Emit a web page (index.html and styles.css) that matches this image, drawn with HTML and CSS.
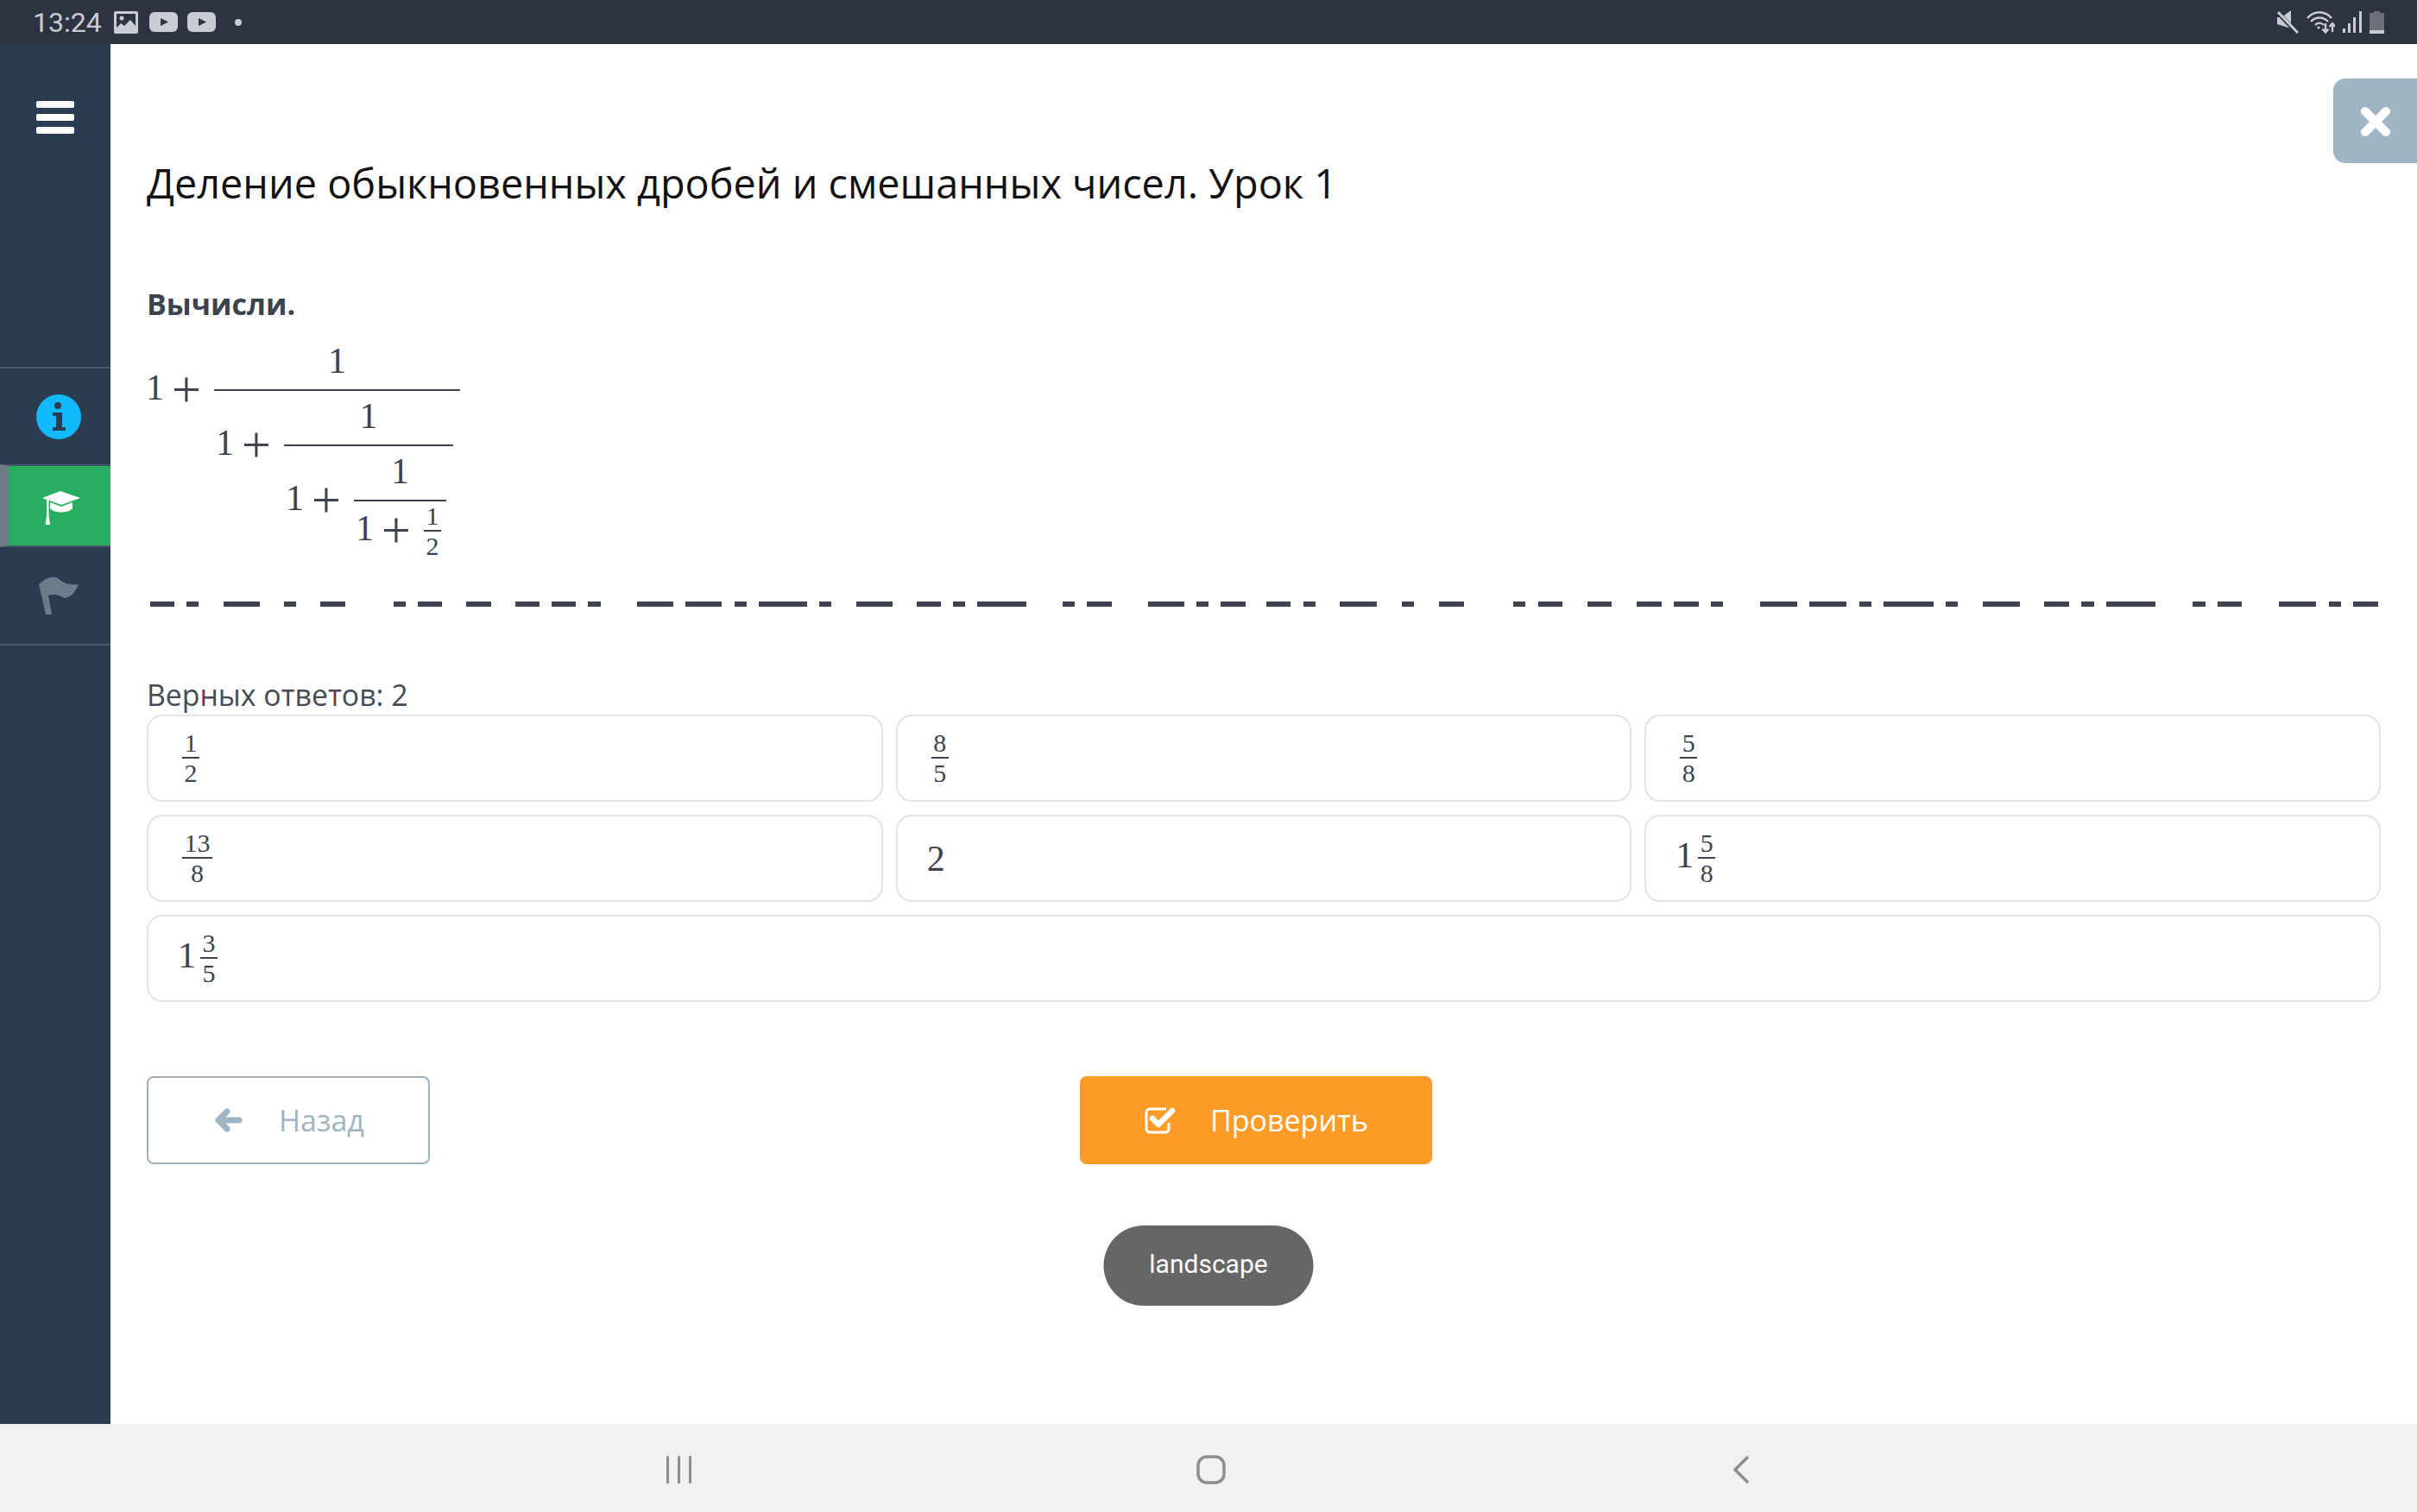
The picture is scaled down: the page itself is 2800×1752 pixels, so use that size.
FILE: index.html
```html
<!DOCTYPE html>
<html lang="ru">
<head>
    <meta charset="UTF-8">
    <title>Деление обыкновенных дробей и смешанных чисел. Урок 1</title>
    <link rel="stylesheet" href="styles.css">
</head>
<body>
    <div id="app">
        <!-- Android status bar -->
        <div class="status-bar">
            <div class="status-left">
                <span class="time">13:24</span>
                <svg class="st-image" width="28" height="26" viewBox="0 0 28 26"><path fill="#c9ccd2" d="M2 0h24a2 2 0 0 1 2 2v22a2 2 0 0 1-2 2H2a2 2 0 0 1-2-2V2a2 2 0 0 1 2-2z"/><path fill="#2d3340" d="M3 3h22v14l-6-7-7 7-4-3-5 5z"/><circle cx="9" cy="8" r="2.5" fill="#c9ccd2"/></svg>
                <svg class="st-yt" width="33" height="23" viewBox="0 0 33 23"><rect width="33" height="23" rx="6" fill="#c9ccd2"/><path fill="#2d3340" d="M13 7l9 4.5-9 4.5z"/></svg>
                <svg class="st-yt" width="33" height="23" viewBox="0 0 33 23"><rect width="33" height="23" rx="6" fill="#c9ccd2"/><path fill="#2d3340" d="M13 7l9 4.5-9 4.5z"/></svg>
                <span class="st-dot"></span>
            </div>
            <div class="status-right">
                <svg width="25" height="27" viewBox="0 0 25 27"><path fill="#c9ccd2" d="M0 8h5l11-8v21L0 16z"/><path stroke="#2d3340" stroke-width="5" d="M0 2l23 24"/><path stroke="#c9ccd2" stroke-width="3" d="M1 2l23 24"/></svg>
                <svg width="33" height="27" viewBox="0 0 33 27" fill="none" stroke="#c9ccd2" stroke-width="2.4"><path d="M1 9c8-9 20-9 28 0"/><path d="M5 13c6-6 14-6 20 0"/><path d="M10 17c3-3 7-3 10 0"/><circle cx="14" cy="20" r="1.6" fill="#c9ccd2" stroke="none"/><path d="M22 15v10M18.500 21.500l3.500 4 3.500-4M30 25v-10M26.500 19l3.500-4 3.500 4"/></svg>
                <svg width="22" height="25" viewBox="0 0 22 25" fill="#c9ccd2"><rect x="0" y="20" width="3" height="5"/><rect x="6" y="14" width="3" height="11"/><rect x="12" y="7" width="3" height="18"/><rect x="19" y="0" width="3" height="25"/></svg>
                <svg width="17" height="26" viewBox="0 0 17 26"><path fill="#6c707a" d="M5 0h7v2h5v20H0V2h5z"/><rect y="22" width="17" height="4" fill="#c9ccd2"/></svg>
            </div>
        </div>

        <div class="screen">
            <aside class="sidebar">
                <div class="burger"><span></span><span></span><span></span></div>
                <div class="side-item side-info">
                    <svg width="52" height="52" viewBox="0 0 52 52"><circle cx="26" cy="26" r="26" fill="#12b9ff"/><circle cx="25" cy="13" r="4" fill="#2c3c50"/><path fill="#2c3c50" d="M19 21h11v17h4v4H19v-4h4V25h-4z"/></svg>
                </div>
                <div class="side-item side-lesson">
                    <svg width="44" height="39" viewBox="0 0 44 39" fill="#fff"><path d="M21 0l23 8-22 8L0 8z"/><path d="M9 13l13 5 13-5v7c-4 6-22 6-26 0z"/><path d="M5 10l2.500 1v17L9 39H3.500L5 28z"/></svg>
                </div>
                <div class="side-item side-flag">
                    <svg width="46" height="44" viewBox="0 0 46 44"><path fill="#6c7c8d" d="M0 9C8 1 16-1 22 2c6 6 14 8 24 7-4 10-9 15-17 16-5-4-11-5-18-3l4 22H8z"/></svg>
                </div>
            </aside>

            <main class="content">
                <button class="close-btn"><svg width="36" height="36" viewBox="0 0 36 36"><path d="M6 6l24 24M30 6L6 30" stroke="#fff" stroke-width="10" stroke-linecap="round"/></svg></button>
                <h1 class="lesson-title">Деление обыкновенных дробей и смешанных чисел. Урок 1</h1>
                <p class="task-title">Вычисли.</p>

                <div class="math task-formula">
                    <div class="frac">
                        <div class="lead"><span class="lead-in"><span>1</span><span class="plus">+</span></span></div>
                        <div class="num">1</div>
                        <div class="bar"></div>
                        <div class="den">
                            <div class="frac">
                                <div class="lead"><span class="lead-in"><span>1</span><span class="plus">+</span></span></div>
                                <div class="num">1</div>
                                <div class="bar"></div>
                                <div class="den">
                                    <div class="frac">
                                        <div class="lead"><span class="lead-in"><span>1</span><span class="plus">+</span></span></div>
                                        <div class="num">1</div>
                                        <div class="bar"></div>
                                        <div class="den den-last">
                                            <div class="frac">
                                                <div class="lead"><span class="lead-in"><span>1</span><span class="plus">+</span></span></div>
                                                <div class="num small">1</div>
                                                <div class="bar"></div>
                                                <div class="den small">2</div>
                                            </div>
                                        </div>
                                    </div>
                                </div>
                            </div>
                        </div>
                    </div>
                </div>

                <!-- broken answer field line -->
                <div class="dashes">
                    <div class="dash-set set-a">
                        <i class="d2"></i><i class="g1 d1"></i><i class="g2 d3"></i><i class="g2 d1"></i><i class="g2 d2"></i><i class="g4 d1"></i><i class="g1 d2"></i><i class="g2 d2"></i><i class="g2 d2"></i><i class="g1 d2"></i><i class="g1 d1"></i><i class="g3 d3"></i><i class="g1 d3"></i><i class="g1 d1"></i><i class="g1 d4"></i><i class="g1 d1"></i><i class="g2 d3"></i><i class="g2 d2"></i><i class="g1 d1"></i><i class="g1 d4"></i><i class="g3 d1"></i><i class="g1 d2"></i><i class="g3 d3"></i><i class="g1 d1"></i><i class="g1 d2"></i>
                    </div>
                    <div class="dash-set set-b">
                        <i class="d2"></i><i class="g1 d1"></i><i class="g2 d3"></i><i class="g2 d1"></i><i class="g2 d2"></i><i class="g4 d1"></i><i class="g1 d2"></i><i class="g2 d2"></i><i class="g2 d2"></i><i class="g1 d2"></i><i class="g1 d1"></i><i class="g3 d3"></i><i class="g1 d3"></i><i class="g1 d1"></i><i class="g1 d4"></i><i class="g1 d1"></i><i class="g2 d3"></i><i class="g2 d2"></i><i class="g1 d1"></i><i class="g1 d4"></i><i class="g3 d1"></i><i class="g1 d2"></i><i class="g3 d3"></i><i class="g1 d1"></i><i class="g1 d2"></i>
                    </div>
                </div>

                <p class="answers-count">Верных ответов: 2</p>
                <div class="options">
                    <div class="option math"><div class="frac"><div class="num small">1</div><div class="bar"></div><div class="den small">2</div></div></div>
                    <div class="option math"><div class="frac"><div class="num small">8</div><div class="bar"></div><div class="den small">5</div></div></div>
                    <div class="option math"><div class="frac"><div class="num small">5</div><div class="bar"></div><div class="den small">8</div></div></div>
                    <div class="option math"><div class="frac"><div class="num small">13</div><div class="bar"></div><div class="den small">8</div></div></div>
                    <div class="option math"><span class="whole">2</span></div>
                    <div class="option math"><div class="frac"><div class="lead"><span class="lead-in mixed">1</span></div><div class="num small">5</div><div class="bar"></div><div class="den small">8</div></div></div>
                    <div class="option option-wide math"><div class="frac"><div class="lead"><span class="lead-in mixed">1</span></div><div class="num small">3</div><div class="bar"></div><div class="den small">5</div></div></div>
                </div>

                <div class="actions">
                    <button class="btn btn-back">
                        <svg width="33" height="28" viewBox="0 0 33 28" fill="none" stroke="#9fb4c3" stroke-width="7" stroke-linecap="round" stroke-linejoin="round"><path d="M29 14H5M15 4L5 14l10 10"/></svg>
                        <span>Назад</span>
                    </button>
                    <button class="btn btn-check">
                        <svg width="36" height="32" viewBox="0 0 36 32" fill="none" stroke="#fff"><path stroke-width="3" d="M28 19v7a4 4 0 0 1-4 4H6a4 4 0 0 1-4-4V7a4 4 0 0 1 4-4h19"/><path stroke-width="6.500" stroke-linecap="round" stroke-linejoin="round" d="M9 14l7 7L32 5"/></svg>
                        <span>Проверить</span>
                    </button>
                </div>
            </main>
        </div>

        <!-- Android navigation bar -->
        <nav class="nav-bar">
            <svg class="nav-recent" width="30" height="32" viewBox="0 0 30 32" fill="#8e8e8e"><rect x="0" y="0" width="3" height="32" rx="1"/><rect x="13" y="0" width="3" height="32" rx="1"/><rect x="26" y="0" width="3" height="32" rx="1"/></svg>
            <svg class="nav-home" width="34" height="34" viewBox="0 0 34 34" fill="none" stroke="#8e8e8e" stroke-width="3.500"><rect x="2" y="2" width="30" height="30" rx="10"/></svg>
            <svg class="nav-back" width="20" height="32" viewBox="0 0 20 32" fill="none" stroke="#8e8e8e" stroke-width="3.500" stroke-linecap="round" stroke-linejoin="round"><path d="M17 2L3 16l14 14"/></svg>
        </nav>

        <div class="toast">landscape</div>
    </div>
</body>
</html>
```

FILE: styles.css
```css
html, body {
    margin: 0;
    padding: 0;
}

body {
    font-family: 'Open Sans', sans-serif;
    background-color: #fff;
    color: #3e454f;
}

#app {
    width: 2800px;
    height: 1752px;
    display: flex;
    flex-direction: column;
    position: relative;
    overflow: hidden;
}

/* Status bar */
.status-bar {
    height: 51px;
    flex: none;
    background-color: #2d3340;
    display: flex;
    justify-content: space-between;
    align-items: center;
    padding: 0 38px 0 38px;
}

.status-left, .status-right {
    display: flex;
    align-items: center;
}

.time {
    font-family: 'Roboto', sans-serif;
    font-size: 32px;
    color: #c9ccd2;
    width: 94px;
}

.st-yt {
    margin-left: 11px;
}

.st-image + .st-yt {
    margin-left: 13px;
}

.st-dot {
    width: 8px;
    height: 8px;
    border-radius: 50%;
    background-color: #c9ccd2;
    margin-left: 22px;
}

.status-right svg {
    margin-left: 9px;
}

.screen {
    flex: 1;
    display: flex;
    min-height: 0;
}

/* Sidebar */
.sidebar {
    width: 128px;
    flex: none;
    background-color: #2c3c50;
    display: flex;
    flex-direction: column;
}

.burger {
    height: 374px;
    box-sizing: border-box;
    padding: 66px 42px 0;
    display: flex;
    flex-direction: column;
    gap: 7px;
}

.burger span {
    height: 8px;
    border-radius: 2px;
    background-color: #fff;
}

.side-item {
    display: flex;
    align-items: center;
    justify-content: center;
    border-top: 2px solid #4a5866;
    box-sizing: border-box;
}

.side-info {
    height: 113px;
    padding-left: 7px;
}

.side-lesson {
    height: 96px;
    background-color: #27ae60;
    border-left: 10px solid #6e7c88;
    border-top-color: #4a5866;
    border-bottom: 2px solid #4a5866;
    padding: 4px 0 0 4px;
}

.side-flag {
    height: 114px;
    border-top: none;
    border-bottom: 2px solid #4a5866;
    padding-left: 8px;
}

/* Main content */
.content {
    flex: 1;
    position: relative;
    box-sizing: border-box;
    padding: 129px 42px 0 42px;
}

.close-btn {
    position: absolute;
    top: 40px;
    right: 0;
    width: 97px;
    height: 98px;
    border: none;
    border-radius: 14px 0 0 14px;
    background-color: #a0b5c4;
    display: flex;
    align-items: center;
    justify-content: center;
    padding: 2px 0 0 0;
}

.lesson-title {
    margin: 0;
    font-size: 46.800px;
    font-weight: 400;
    line-height: 64px;
    color: #111;
}

.task-title {
    margin: 85px 0 0;
    font-size: 34px;
    font-weight: 700;
    line-height: 46px;
    color: #3b434e;
}

/* Formulas */
.math {
    font-family: 'Liberation Serif', serif;
    font-size: 42px;
    color: #3c434d;
}

.task-formula {
    margin: 23px 0 0 -2px;
}

.frac {
    display: inline-grid;
    grid-template-columns: auto auto;
    vertical-align: top;
}

.lead {
    grid-column: 1;
    grid-row: 2;
    height: 0;
    display: flex;
    align-items: center;
}

.lead-in {
    display: block;
    width: 79px;
    padding-left: 1px;
    line-height: 40px;
    margin-bottom: 5px;
    white-space: nowrap;
}

.lead-in.mixed {
    width: 25px;
    padding-left: 0;
    margin-left: -5px;
    margin-right: 1px;
}

.plus {
    font-size: 60px;
    margin-left: 9px;
    vertical-align: -8px;
    line-height: 0;
}

.num {
    grid-column: 2;
    grid-row: 1;
    text-align: center;
    line-height: 40px;
    padding-bottom: 13px;
}

.bar {
    grid-column: 2;
    grid-row: 2;
    height: 2px;
    background-color: #3c434d;
}

.den {
    grid-column: 2;
    grid-row: 3;
    padding: 9px 8px 0 1px;
}

.den-last {
    padding: 3px 6px 0 1px;
}

.num.small, .den.small {
    font-size: 30px;
    line-height: 28px;
    text-align: center;
}

.num.small {
    padding: 0 2.5px 2px;
}

.den.small {
    padding: 3px 2.5px 0;
}

/* Broken line of dashes */
.dashes {
    display: flex;
    margin: 50px 0 0 4px;
}

.dash-set {
    display: flex;
}

.set-a {
    --u: 14.1px;
    margin-right: 24px;
}

.set-b {
    --u: 14.32px;
}

.dash-set i {
    display: block;
    height: 6px;
    background-color: #3d444e;
}

.d1 { width: var(--u); }
.d2 { width: calc(var(--u) * 2); }
.d3 { width: calc(var(--u) * 3); }
.d4 { width: calc(var(--u) * 4); }

.g1 { margin-left: var(--u); }
.g2 { margin-left: calc(var(--u) * 2); }
.g3 { margin-left: calc(var(--u) * 3); }
.g4 { margin-left: calc(var(--u) * 4); }

.answers-count {
    margin: 79px 0 0;
    font-size: 33.800px;
    line-height: 46px;
    color: #444b55;
}

/* Answer options */
.options {
    display: grid;
    grid-template-columns: repeat(3, 1fr);
    grid-auto-rows: 101px;
    gap: 15px;
}

.option {
    border: 2px solid #e3e3e3;
    border-radius: 18px;
    padding-left: 39px;
    display: flex;
    align-items: center;
}

.option-wide {
    grid-column: 1 / -1;
}

.whole {
    line-height: 40px;
    margin-left: -5px;
}

/* Buttons */
.actions {
    display: flex;
    margin-top: 86px;
}

.btn {
    height: 102px;
    box-sizing: border-box;
    border-radius: 8px;
    font-family: 'Open Sans', sans-serif;
    font-size: 34px;
    display: flex;
    align-items: center;
    padding: 0;
}

.btn-back {
    width: 328px;
    background-color: #fff;
    border: 2px solid #a0b0ba;
    color: #9fb3c1;
    padding-left: 76px;
    gap: 42px;
}

.btn-check {
    width: 408px;
    margin-left: 753px;
    background-color: #fd9b28;
    border: none;
    color: #fff;
    padding-left: 75px;
    gap: 40px;
}

/* Toast */
.toast {
    position: absolute;
    top: 1420px;
    left: 50%;
    transform: translateX(-50%);
    width: 243px;
    height: 93px;
    border-radius: 47px;
    background-color: #666;
    color: #fff;
    font-family: 'Roboto', sans-serif;
    font-size: 30px;
    line-height: 90px;
    text-align: center;
}

/* Navigation bar */
.nav-bar {
    height: 102px;
    flex: none;
    background-color: #f1f1f1;
    display: flex;
    align-items: center;
    padding-top: 3px;
    box-sizing: border-box;
}

.nav-recent {
    margin-left: 772px;
}

.nav-home {
    margin-left: 584px;
}

.nav-back {
    margin-left: 587px;
}
```
